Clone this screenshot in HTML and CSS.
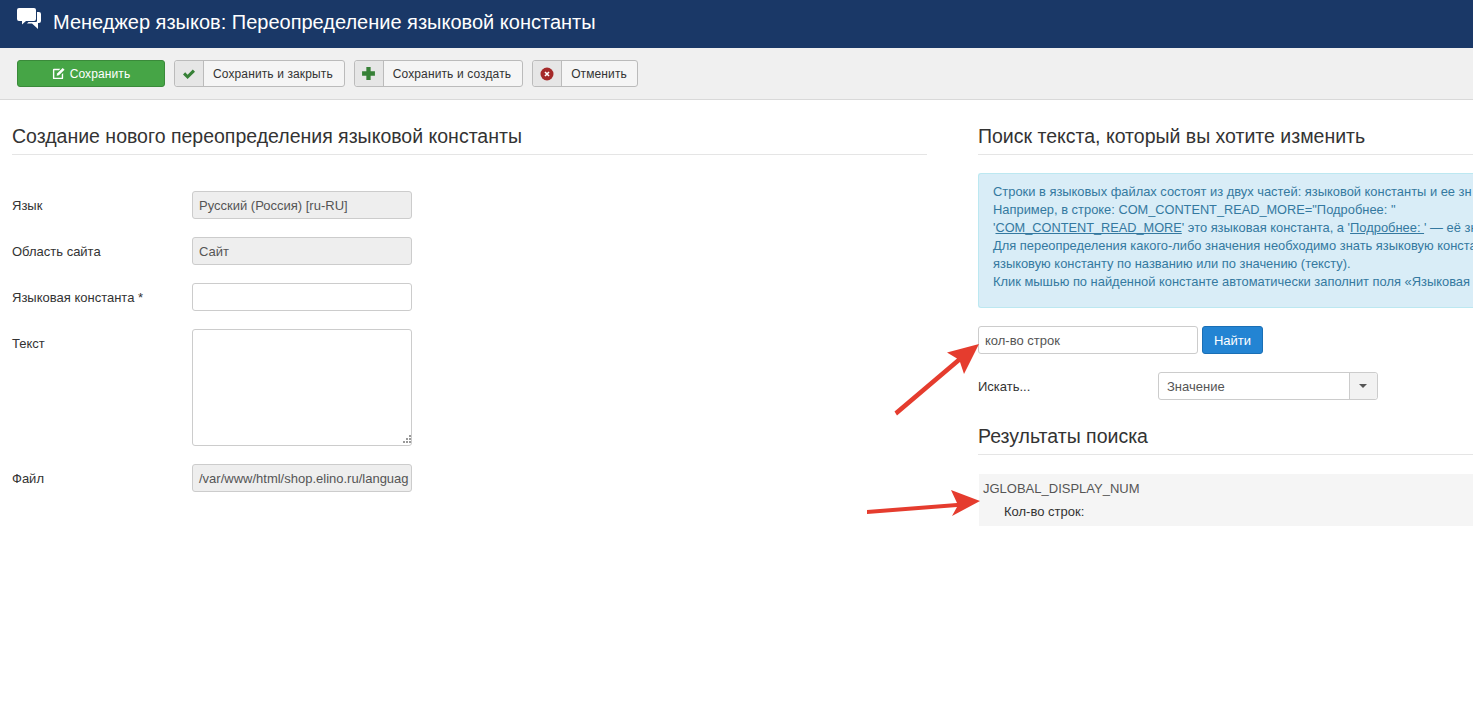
FILE: index.html
```html
<!DOCTYPE html>
<html lang="ru">
<head>
  <meta charset="UTF-8">
  <title>Менеджер языков: Переопределение языковой константы</title>
  <link rel="stylesheet" href="styles.css">
</head>
<body>
  <header class="title-bar">
    <svg class="title-icon" viewBox="0 0 24 22" width="24" height="22">
      <path fill="#fff" d="M2 0h15a2 2 0 0 1 2 2v9a2 2 0 0 1-2 2H9l-4 3.500V13H2a2 2 0 0 1-2-2V2a2 2 0 0 1 2-2z"/>
      <path fill="#fff" d="M20 4h2a2 2 0 0 1 2 2v7a2 2 0 0 1-2 2h-1v6l-6-5.500h-5l1.500-1.500H19a1 1 0 0 0 1-1z"/>
    </svg>
    <h1>Менеджер языков: Переопределение языковой константы</h1>
  </header>

  <div class="toolbar">
    <button class="btn btn-save">
      <svg viewBox="0 0 14 14" width="13" height="13">
        <path fill="#fff" d="M2 2h7L7.500 3.500H2.500v8h8V8L12 6.500V12a1 1 0 0 1-1 1H2a1 1 0 0 1-1-1V3a1 1 0 0 1 1-1z"/>
        <path fill="#fff" d="M11.500 1 13.500 3 7.500 9 5 9.500 5.500 7z"/>
      </svg>
      Сохранить
    </button>
    <button class="btn btn-split">
      <span class="btn-icon">
        <svg viewBox="0 0 14 14" width="14" height="14"><path fill="#378137" d="M1 7.500 3.200 5.300 5.600 7.700 10.800 2.500 13 4.700 5.600 12z"/></svg>
      </span>
      <span class="btn-label">Сохранить и закрыть</span>
    </button>
    <button class="btn btn-split">
      <span class="btn-icon">
        <svg viewBox="0 0 14 14" width="15" height="15"><path fill="#378137" d="M5 1h4v4h4v4H9v4H5V9H1V5h4z"/></svg>
      </span>
      <span class="btn-label">Сохранить и создать</span>
    </button>
    <button class="btn btn-split">
      <span class="btn-icon">
        <svg viewBox="0 0 14 14" width="14" height="14">
          <circle cx="7" cy="7" r="6.500" fill="#a52a2a"/>
          <path stroke="#fff" stroke-width="1.600" d="M5 5l4 4m0-4l-4 4"/>
        </svg>
      </span>
      <span class="btn-label">Отменить</span>
    </button>
  </div>

  <main class="content">
    <section class="col-left">
      <h2 class="section-title">Создание нового переопределения языковой константы</h2>
      <div class="form-rows">
        <div class="form-row">
          <label>Язык</label>
          <div class="field field-off">Русский (Россия) [ru-RU]</div>
        </div>
        <div class="form-row">
          <label>Область сайта</label>
          <div class="field field-off">Сайт</div>
        </div>
        <div class="form-row">
          <label>Языковая константа *</label>
          <div class="field"></div>
        </div>
        <div class="form-row">
          <label>Текст</label>
          <div class="field field-area">
            <svg class="grip" viewBox="0 0 9 9" width="9" height="9">
              <path fill="#999" d="M7 0h2v2H7zM4 3h2v2H4zM7 3h2v2H7zM1 6h2v2H1zM4 6h2v2H4zM7 6h2v2H7z"/>
            </svg>
          </div>
        </div>
        <div class="form-row">
          <label>Файл</label>
          <div class="field field-off">/var/www/html/shop.elino.ru/languag</div>
        </div>
      </div>
    </section>

    <section class="col-right">
      <h2 class="section-title">Поиск текста, который вы хотите изменить</h2>
      <div class="alert">
        Строки в языковых файлах состоят из двух частей: языковой константы и ее зн<br>
        Например, в строке: <span class="code">COM_CONTENT_READ_MORE</span>="Подробнее: "<br>
        '<u class="code">COM_CONTENT_READ_MORE</u>' это языковая константа, а '<u>Подробнее: </u>' — её зн<br>
        Для переопределения какого-либо значения необходимо знать языковую конста<br>
        языковую константу по названию или по значению (тексту).<br>
        Клик мышью по найденной константе автоматически заполнит поля «Языковая
      </div>
      <div class="search-row">
        <div class="field">кол-во строк</div>
        <button class="btn-find">Найти</button>
      </div>
      <div class="search-by">
        <label>Искать...</label>
        <div class="select">
          <span class="select-value">Значение</span>
          <span class="select-arrow"></span>
        </div>
      </div>
      <h2 class="section-title section-title-results">Результаты поиска</h2>
      <div class="result">
        <div class="result-key">JGLOBAL_DISPLAY_NUM</div>
        <div class="result-value">Кол-во строк:</div>
      </div>
    </section>
  </main>

  <svg class="arrows" viewBox="0 0 1473 711" width="1473" height="711">
    <path fill="#e53c2e" d="M894.500 411.500 957 358.500 947 352.500 979 344 964 374 960 362 897 415.500z"/>
    <path fill="#e53c2e" d="M867 510 957 503 951 490 980 501 952 516 957 507 867 514z"/>
  </svg>
</body>
</html>
```

FILE: styles.css
```css
* {
  box-sizing: border-box;
}

html, body {
  height: 100%;
}

body {
  margin: 0;
  overflow: hidden;
  background: #fff;
  color: #333;
  font-family: "Liberation Sans", Arial, sans-serif;
  font-size: 13px;
  line-height: 18px;
  position: relative;
}

/* Title bar */
.title-bar {
  display: flex;
  align-items: center;
  height: 48px;
  padding: 0 17px 4px;
  background: #1a3867;
  color: #fff;
}

.title-icon {
  margin-right: 12px;
  margin-top: -6px;
}

.title-bar h1 {
  margin: 0;
  font-size: 20px;
  font-weight: 400;
  line-height: 24px;
}

/* Toolbar */
.toolbar {
  display: flex;
  align-items: flex-start;
  gap: 9px;
  height: 52px;
  padding: 12px 17px 0;
  background: #f0f0f0;
  border-bottom: 1px solid #d9d9d9;
}

.btn {
  display: flex;
  align-items: center;
  height: 27px;
  padding: 0;
  border: 1px solid #bbb;
  border-radius: 3px;
  background: #f5f5f5;
  color: #333;
  font-family: inherit;
  font-size: 12px;
  letter-spacing: 0.12px;
}

.btn-save {
  justify-content: center;
  gap: 5px;
  width: 148px;
  background: #46a546;
  border-color: #3a8a3a;
  color: #fff;
}

.btn-icon {
  display: flex;
  align-items: center;
  justify-content: center;
  width: 29px;
  height: 100%;
  background: #e6e6e6;
  border-right: 1px solid #bbb;
  border-radius: 3px 0 0 3px;
}

.btn-label {
  padding: 0 11px 0 9px;
}

.btn-split:last-child .btn-label {
  padding-right: 10px;
}

/* Content columns */
.content {
  display: flex;
  gap: 51px;
  padding-left: 12px;
}

.col-left {
  flex: none;
  width: 915px;
}

.col-right {
  flex: 1;
  min-width: 0;
}

.section-title {
  margin: 24px 0 36px;
  padding-bottom: 6px;
  border-bottom: 1px solid #e5e5e5;
  color: #333;
  font-size: 19.5px;
  font-weight: 400;
  line-height: 24px;
}

/* Form */
.form-rows {
  display: flex;
  flex-direction: column;
  gap: 18px;
}

.form-row {
  display: flex;
}

.form-row label {
  flex: none;
  width: 180px;
  padding-top: 6px;
}

.field {
  width: 220px;
  height: 28px;
  padding: 5px 6px;
  overflow: hidden;
  border: 1px solid #ccc;
  border-radius: 3px;
  background: #fff;
  color: #555;
  white-space: nowrap;
}

.field-off {
  background: #eee;
}

.field-area {
  height: 117px;
  position: relative;
}

.grip {
  position: absolute;
  right: 0;
  bottom: 1px;
}

/* Right column, the box runs out past the window edge */
.alert {
  height: 135px;
  margin-top: -18px;
  padding: 9px 0 9px 14px;
  background: #d9edf7;
  border: 1px solid #bce8f1;
  border-right: 0;
  border-radius: 3px 0 0 3px;
  color: #3479a0;
  font-size: 12.9px;
  white-space: nowrap;
}

.code {
  font-size: 12.75px;
}

.search-row {
  display: flex;
  gap: 4px;
  margin-top: 18px;
}

.btn-find {
  width: 61px;
  height: 28px;
  padding: 0;
  background: #2384d3;
  border: 1px solid #1a6fb5;
  border-radius: 3px;
  color: #fff;
  font-family: inherit;
  font-size: 13px;
}

.search-by {
  display: flex;
  margin-top: 18px;
}

.search-by label {
  width: 180px;
  padding-top: 6px;
}

.select {
  display: flex;
  width: 220px;
  height: 28px;
  border: 1px solid #ccc;
  border-radius: 3px;
  background: #fff;
  color: #555;
}

.select-value {
  flex: 1;
  padding: 5px 8px;
}

.select-arrow {
  position: relative;
  width: 28px;
  background: #f2f2f2;
  border-left: 1px solid #ccc;
  border-radius: 0 3px 3px 0;
}

.select-arrow::after {
  content: "";
  position: absolute;
  left: 9px;
  top: 11px;
  border: 4px solid transparent;
  border-top-color: #555;
  border-bottom: 0;
}

.section-title-results {
  margin: 24px 0 19px;
}

.result {
  height: 52px;
  margin-left: 1px;
  padding: 5px 4px;
  background: #f5f5f5;
}

.result-key {
  color: #555;
  line-height: 20px;
}

.result-value {
  padding: 3px 0 0 21px;
  line-height: 20px;
}

/* Annotation arrows on top of the screenshot */
.arrows {
  position: absolute;
  left: 0;
  top: 0;
  pointer-events: none;
}
```
